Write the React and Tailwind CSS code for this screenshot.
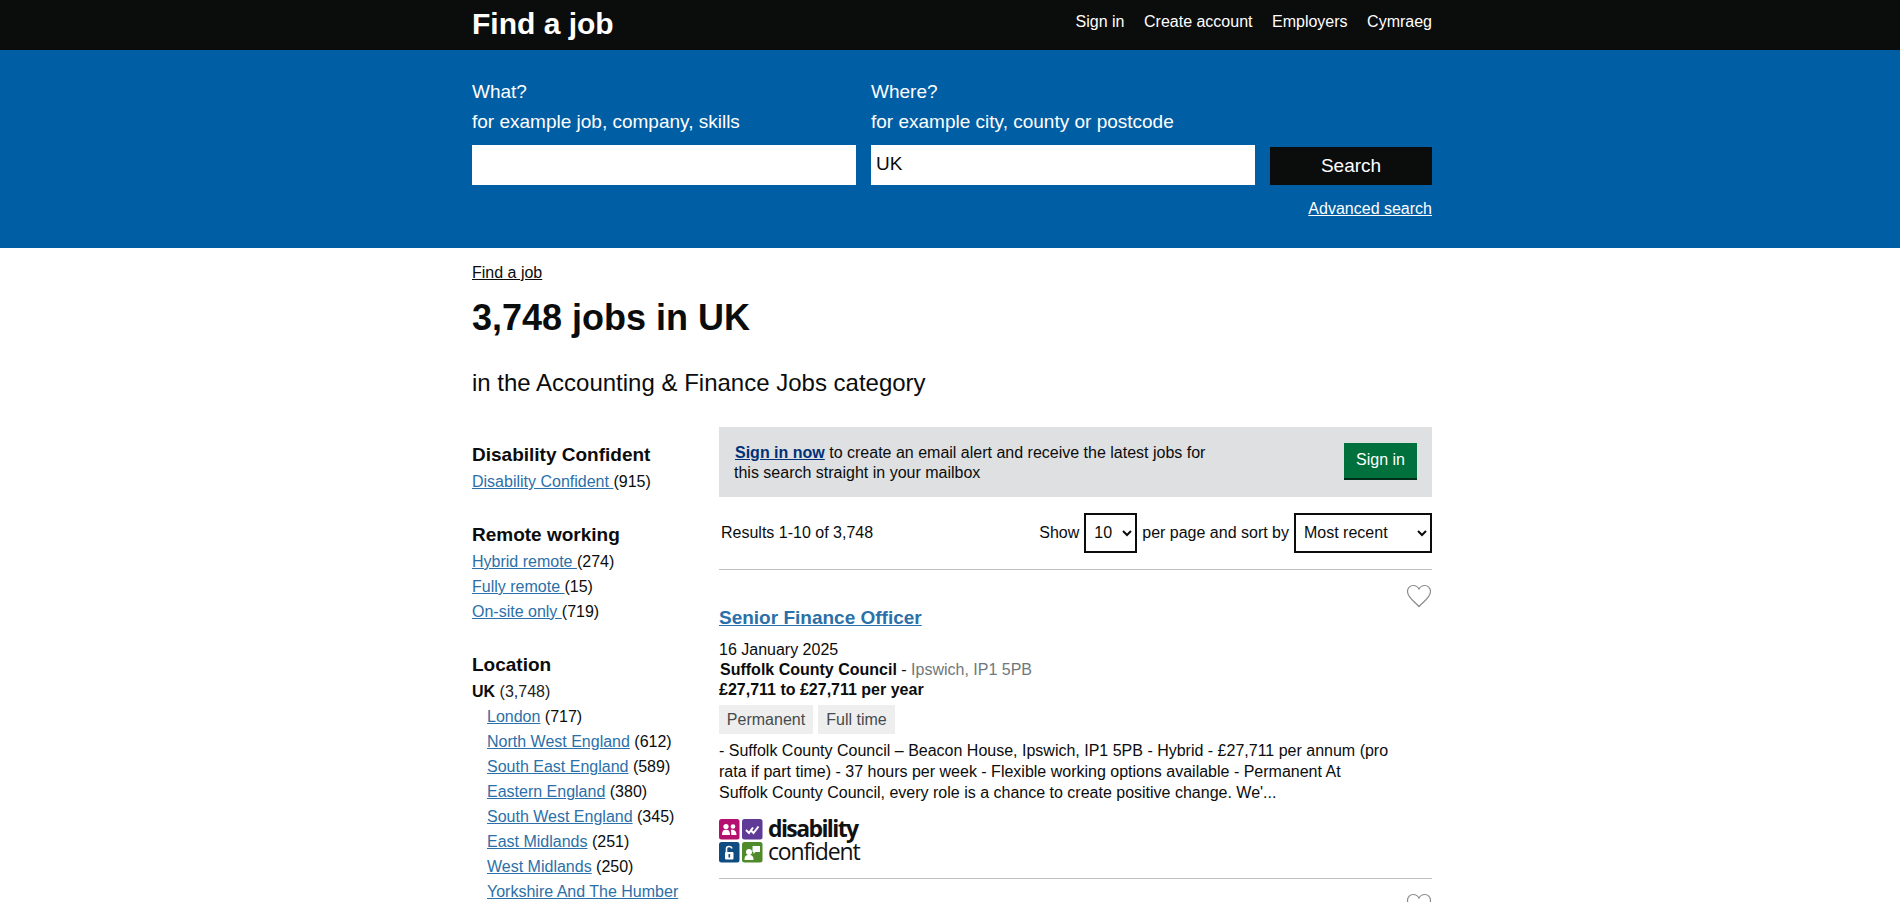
import React from 'react'

const remote = [
  ['Hybrid remote ', '(274)'],
  ['Fully remote ', '(15)'],
  ['On-site only ', '(719)'],
]

const regions = [
  ['London', '(717)'],
  ['North West England', '(612)'],
  ['South East England', '(589)'],
  ['Eastern England', '(380)'],
  ['South West England', '(345)'],
  ['East Midlands', '(251)'],
  ['West Midlands', '(250)'],
  ['Yorkshire And The Humber', '(236)'],
]

function Heart() {
  return (
    <svg width="26" height="24" viewBox="0 0 26 24" fill="none" stroke="#8a8a8a" strokeWidth="1.2">
      <path d="M13 22.5 C9 18 1.5 13.5 1.5 7.5 C1.5 3.8 4.2 1.5 7.2 1.5 C9.6 1.5 11.8 2.8 13 5 C14.2 2.8 16.4 1.5 18.8 1.5 C21.8 1.5 24.5 3.8 24.5 7.5 C24.5 13.5 17 18 13 22.5 Z" />
    </svg>
  )
}

// the four coloured tiles of the disability confident badge
function BadgeTiles() {
  return (
    <svg width="44" height="44" viewBox="0 0 44 44" className="shrink-0">
      <rect x="0" y="0" width="20.5" height="20.5" rx="2.5" fill="#b5106f" />
      <rect x="23" y="0" width="20.5" height="20.5" rx="2.5" fill="#5f3a96" />
      <rect x="0" y="23" width="20.5" height="20.5" rx="2.5" fill="#0f4c81" />
      <rect x="23" y="23" width="20.5" height="20.5" rx="2.5" fill="#4f8a2b" />
      <g fill="#fff">
        <circle cx="7" cy="7.5" r="2.6" />
        <path d="M3 16 C3 12 4.5 10.8 7 10.8 C9.5 10.8 11 12 11 16 Z" />
        <circle cx="14" cy="7.5" r="2.3" />
        <path d="M11.8 10.8 C14.8 10.2 17.5 11.5 17.5 16 L12.3 16 C12.3 13.8 12.2 12 11.8 10.8 Z" />
        <rect x="6" y="33" width="8.5" height="7.5" rx="1" />
        <circle cx="30" cy="33" r="3" />
        <path d="M25.5 41 C25.5 37 27 36 30 36 C33 36 34.5 37 34.5 41 Z" />
        <path d="M33.5 27 H41 V33 H36.5 L34.5 35 V33 H33.5 Z" />
      </g>
      <path d="M7.5 33 V29.5 C7.5 26.8 12.5 26.8 12.8 29.5" fill="none" stroke="#fff" strokeWidth="1.6" />
      <rect x="9.5" y="35" width="1.6" height="3.5" fill="#0f4c81" />
      <path d="M27 11 L30 14 L34 8.5 M32.5 12 L34.5 14 L39.5 7.5" fill="none" stroke="#fff" strokeWidth="2" />
    </svg>
  )
}

function DisabilityLogo() {
  return (
    <div className="flex items-center gap-[5px] mt-[16px] h-[44px]">
      <BadgeTiles />
      <div className="font-['Open_Sans',sans-serif] text-[#111] text-[23px] leading-[23px] mt-[-2px]">
        <div className="font-bold tracking-[-1.6px]">disability</div>
        <div className="tracking-[-1.15px]">confident</div>
      </div>
    </div>
  )
}

export default function App() {
  return (
    <div className="h-[902px] overflow-hidden bg-white text-[#0b0c0c] font-['Liberation_Sans',Arial,sans-serif] text-[16px]">
      <header className="bg-[#0b0c0c] h-[50px]">
        <div className="w-[960px] ml-[472px] flex justify-between">
          <a className="text-white font-bold text-[30px] leading-[48px]">Find a job</a>
          <nav className="flex gap-[19.5px] text-white text-[16px] leading-[43px]">
            <a>Sign in</a>
            <a>Create account</a>
            <a>Employers</a>
            <a>Cymraeg</a>
          </nav>
        </div>
      </header>

      <section className="bg-[#005ea5] h-[198px] text-white">
        <div className="w-[960px] ml-[472px] pt-[27px]">
          <div className="flex gap-[15px] items-end">
            <div className="w-[384px]">
              <div className="text-[19px] leading-[30px]">What?</div>
              <div className="text-[19px] leading-[30px] mb-[8px]">for example job, company, skills</div>
              <div className="h-[40px] bg-white" />
            </div>
            <div className="w-[384px]">
              <div className="text-[19px] leading-[30px]">Where?</div>
              <div className="text-[19px] leading-[30px] mb-[8px]">for example city, county or postcode</div>
              <div className="h-[40px] bg-white text-[#0b0c0c] text-[19px] leading-[38px] px-[5px]">UK</div>
            </div>
            <button className="w-[162px] h-[38px] bg-[#0b0c0c] text-white text-[19px]">Search</button>
          </div>
          <div className="text-right mt-[14px] leading-[20px]">
            <a className="underline">Advanced search</a>
          </div>
        </div>
      </section>

      <main className="w-[960px] ml-[472px]">
        <a className="block underline mt-[15px] leading-[20px]">Find a job</a>
        <h1 className="font-bold text-[36px] leading-[45px] mt-[12px]">3,748 jobs in UK</h1>
        <p className="text-[24px] leading-[30px] mt-[28px]">in the Accounting &amp; Finance Jobs category</p>

        <div className="flex gap-[30px] mt-[29px]">
          <aside className="w-[217px] shrink-0 pt-[15px] leading-[25px]">
            <h3 className="font-bold text-[19px] leading-[25px]">Disability Confident</h3>
            <div className="mt-[2px]">
              <a className="underline text-[#2b70a8]">Disability Confident </a>(915)
            </div>

            <h3 className="font-bold text-[19px] leading-[25px] mt-[28px]">Remote working</h3>
            <ul className="mt-[2px]">
              {remote.map(([name, count]) => (
                <li key={name}>
                  <a className="underline text-[#2b70a8]">{name}</a>{count}
                </li>
              ))}
            </ul>

            <h3 className="font-bold text-[19px] leading-[25px] mt-[28px]">Location</h3>
            <div className="mt-[2px]">
              <strong>UK</strong> <span className="text-[#222]">(3,748)</span>
            </div>
            <ul className="pl-[15px]">
              {regions.map(([name, count]) => (
                <li key={name}>
                  <a className="underline text-[#2b70a8]">{name}</a> {count}
                </li>
              ))}
            </ul>
          </aside>

          <div className="w-[713px]">
            <div className="bg-[#dee0e2] h-[70px] flex items-center justify-between px-[15px]">
              <p className="w-[480px] leading-[20px] mt-[1px]">
                <a className="font-bold underline text-[#003078] ml-[1px]">Sign in now</a> to create an email alert and receive the latest jobs for this search straight in your mailbox
              </p>
              <button className="w-[73px] h-[37px] mb-[2px] bg-[#00703c] text-white border-b-2 border-[#002d18]">Sign in</button>
            </div>

            <div className="flex justify-between items-center h-[73px] pl-[2px] pb-[1px] border-b border-[#bfc1c3]">
              <span>Results 1-10 of 3,748</span>
              <div className="flex items-center gap-[5px]">
                <span>Show</span>
                <select defaultValue="10" className="w-[53px] h-[40px] border-2 border-[#0b0c0c] bg-white text-[16px] pl-[4px]">
                  <option>10</option>
                </select>
                <span>per page and sort by</span>
                <select defaultValue="Most recent" className="w-[138px] h-[40px] border-2 border-[#0b0c0c] bg-white text-[16px] pl-[4px]">
                  <option>Most recent</option>
                </select>
              </div>
            </div>

            <article className="relative pt-[35px] h-[309px] border-b border-[#bfc1c3]">
              <div className="absolute right-0 top-[14px]"><Heart /></div>
              <a className="font-bold text-[19px] leading-[25px] underline text-[#2b70a8] block">Senior Finance Officer</a>
              <div className="mt-[10px] leading-[20px]">16 January 2025</div>
              <div className="leading-[20px] ml-[1px]">
                <strong>Suffolk County Council</strong> - <span className="text-[#6f777b]">Ipswich, IP1 5PB</span>
              </div>
              <div className="leading-[20px] font-bold">£27,711 to £27,711 per year</div>
              <div className="flex gap-[5px] mt-[5px]">
                <span className="bg-[#eeeeee] text-[#454a4c] w-[94px] text-center h-[29px] leading-[29px]">Permanent</span>
                <span className="bg-[#eeeeee] text-[#454a4c] w-[77px] text-center h-[29px] leading-[29px]">Full time</span>
              </div>
              <p className="w-[672px] mt-[6px] leading-[21px]">
                - Suffolk County Council – Beacon House, Ipswich, IP1 5PB - Hybrid - £27,711 per annum (pro rata if part time) - 37 hours per week - Flexible working options available - Permanent At Suffolk County Council, every role is a chance to create positive change. We'...
              </p>
              <DisabilityLogo />
            </article>

            <div className="flex justify-end pt-[14px]"><Heart /></div>
          </div>
        </div>
      </main>
    </div>
  )
}
